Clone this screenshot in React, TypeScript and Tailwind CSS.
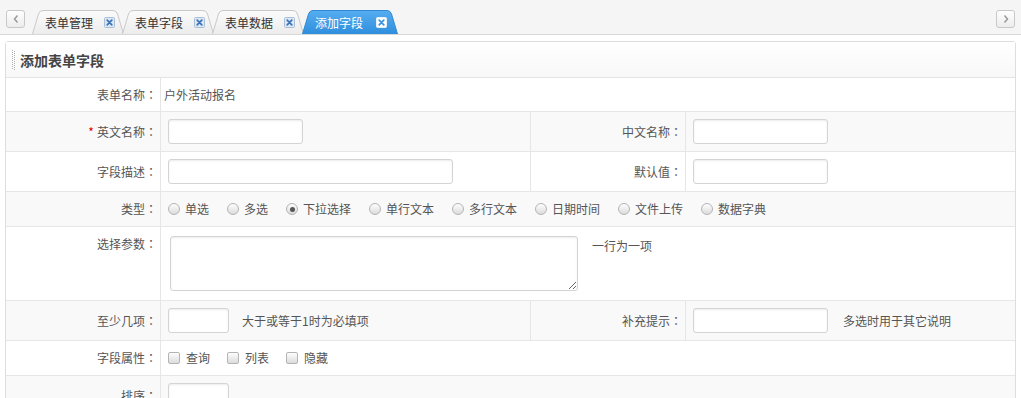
import React from "react";

const FONT = { fontFamily: '"Noto Sans CJK SC", "Liberation Sans", sans-serif' };

function CloseIcon({ active }: { active: boolean }) {
  return (
    <svg width="11" height="11" viewBox="0 0 11 11" className="shrink-0">
      <rect
        x="0.5"
        y="0.5"
        width="10"
        height="10"
        rx="1"
        fill={active ? "#ffffff" : "#dce7f3"}
        stroke={active ? "#e8f2fc" : "#a9bfd8"}
      />
      <path
        d="M3.2 3.2 L7.8 7.8 M7.8 3.2 L3.2 7.8"
        stroke={active ? "#3a93e0" : "#3a74b8"}
        strokeWidth="1.7"
        strokeLinecap="round"
      />
    </svg>
  );
}

function Tab({ label, active }: { label: string; active?: boolean }) {
  const w = active ? 96 : 92;
  const d = `M0.5,24 L6.5,4 Q7.6,0.5 11,0.5 L${w - 11},0.5 Q${w - 7.6},0.5 ${w - 6.5},4 L${w - 0.5},24`;
  return (
    <div
      className={
        active
          ? "relative -ml-[2px] flex h-[24px] w-[96px] shrink-0 items-center gap-[13px] pl-[13px] pt-[1px]"
          : "relative -ml-[2px] flex h-[24px] w-[92px] shrink-0 items-center gap-[11px] pl-[13px] pt-[1px]"
      }
    >
      <svg className="absolute inset-0" width={w} height="24" viewBox={`0 0 ${w} 24`}>
        <defs>
          <linearGradient id="tabInactive" x1="0" y1="0" x2="0" y2="1">
            <stop offset="0" stopColor="#fbfbfb" />
            <stop offset="1" stopColor="#ececec" />
          </linearGradient>
          <linearGradient id="tabActive" x1="0" y1="0" x2="0" y2="1">
            <stop offset="0" stopColor="#56aef0" />
            <stop offset="1" stopColor="#2f8edd" />
          </linearGradient>
        </defs>
        <path
          d={d + " Z"}
          fill={active ? "url(#tabActive)" : "url(#tabInactive)"}
          stroke="none"
        />
        <path d={d} fill="none" stroke={active ? "#2f89d4" : "#c9c9c9"} strokeWidth="1" />
      </svg>
      <span
        className={
          active
            ? "relative text-[12px] leading-[14px] text-white"
            : "relative text-[12px] leading-[14px] text-[#333]"
        }
      >
        {label}
      </span>
      <span className="relative flex">
        <CloseIcon active={!!active} />
      </span>
    </div>
  );
}

function ArrowButton({ dir }: { dir: "left" | "right" }) {
  return (
    <div className="mb-[6px] flex h-[18px] w-[19px] shrink-0 items-center justify-center rounded-[3px] border border-[#c8c8c8] bg-gradient-to-b from-white to-[#ececec]">
      <svg width="8" height="10" viewBox="0 0 8 10">
        <path
          d={dir === "left" ? "M5.5 1.5 L2.5 5 L5.5 8.5" : "M2.5 1.5 L5.5 5 L2.5 8.5"}
          fill="none"
          stroke="#9a9a9a"
          strokeWidth="1.5"
        />
      </svg>
    </div>
  );
}

function Input({ w }: { w: string }) {
  return (
    <div
      className={
        "h-[25px] rounded-[3px] border border-[#d4d4d4] bg-white shadow-[inset_0_1px_2px_rgba(0,0,0,0.08)] " + w
      }
    />
  );
}

function Radio({ label, checked }: { label: string; checked?: boolean }) {
  return (
    <div className="mr-[18px] flex items-center gap-[5px]">
      <span className="flex h-[12px] w-[12px] items-center justify-center rounded-full border border-[#b4b4b4] bg-gradient-to-b from-[#fdfdfd] to-[#dcdcdc]">
        {checked ? <span className="h-[5px] w-[5px] rounded-full bg-[#555]" /> : null}
      </span>
      <span>{label}</span>
    </div>
  );
}

function Checkbox({ label }: { label: string }) {
  return (
    <div className="mr-[17px] flex items-center gap-[6px]">
      <span className="h-[12px] w-[12px] rounded-[2px] border border-[#b4b4b4] bg-gradient-to-b from-[#fdfdfd] to-[#dcdcdc]" />
      <span>{label}</span>
    </div>
  );
}

function Colon() {
  return <span style={{ fontFamily: '"Noto Sans CJK TC", "Noto Sans CJK SC", sans-serif' }}>：</span>;
}

function Label({ children, top }: { children: React.ReactNode; top?: boolean }) {
  return (
    <div
      className={
        top
          ? "flex w-[155px] shrink-0 justify-end border-r border-[#e6e6e6] pr-[3px] pt-[10px] text-[#555]"
          : "flex w-[155px] shrink-0 items-center justify-end border-r border-[#e6e6e6] pr-[3px] text-[#555]"
      }
    >
      {children}
      <Colon />
    </div>
  );
}

export default function App() {
  return (
    <div
      className="h-[398px] w-[1021px] overflow-hidden bg-white text-[12px] leading-[14px] text-[#555]"
      style={FONT}
    >
      {/* Tab bar */}
      <div className="flex h-[35px] items-end justify-between border-b border-[#d8d8d8] bg-[#f5f5f5] pl-[6px] pr-[6px]">
        <div className="flex items-end">
          <ArrowButton dir="left" />
          <div className="ml-[9px] flex items-end">
            <Tab label="表单管理" />
            <Tab label="表单字段" />
            <Tab label="表单数据" />
            <Tab label="添加字段" active />
          </div>
        </div>
        <ArrowButton dir="right" />
      </div>

      {/* Panel */}
      <div className="mx-[5px] mt-[6px] rounded-t-[3px] border border-[#dedede]">
        <div className="flex h-[36px] items-center gap-[4px] border-b border-[#e3e3e3] bg-gradient-to-b from-white to-[#f8f8f8] pl-[6px]">
          <svg width="4" height="20" viewBox="0 0 4 20">
            {Array.from({ length: 10 }).map((_, i) => (
              <React.Fragment key={i}>
                <rect x="0" y={i * 2} width="1" height="1" fill="#b0b0b0" />
                <rect x="2" y={i * 2 + 1} width="1" height="1" fill="#b0b0b0" />
              </React.Fragment>
            ))}
          </svg>
          <span className="text-[14px] font-bold leading-[16px] text-[#444]">添加表单字段</span>
        </div>

        {/* Row 1 */}
        <div className="flex h-[34px] border-b border-[#e6e6e6] bg-white">
          <Label>表单名称</Label>
          <div className="flex items-center pl-[3px]">户外活动报名</div>
        </div>

        {/* Row 2 */}
        <div className="flex h-[40px] border-b border-[#e6e6e6] bg-[#f9f9f9]">
          <Label>
            <span className="mr-[3px] text-[#d00]">*</span>英文名称
          </Label>
          <div className="flex w-[370px] shrink-0 items-center border-r border-[#e6e6e6] pl-[7px]">
            <Input w="w-[135px]" />
          </div>
          <Label>中文名称</Label>
          <div className="flex items-center pl-[7px]">
            <Input w="w-[135px]" />
          </div>
        </div>

        {/* Row 3 */}
        <div className="flex h-[40px] border-b border-[#e6e6e6] bg-white">
          <Label>字段描述</Label>
          <div className="flex w-[370px] shrink-0 items-center border-r border-[#e6e6e6] pl-[7px]">
            <Input w="w-[285px]" />
          </div>
          <Label>默认值</Label>
          <div className="flex items-center pl-[7px]">
            <Input w="w-[135px]" />
          </div>
        </div>

        {/* Row 4 */}
        <div className="flex h-[35px] border-b border-[#e6e6e6] bg-[#f9f9f9]">
          <Label>类型</Label>
          <div className="flex items-center pl-[7px]">
            <Radio label="单选" />
            <Radio label="多选" />
            <Radio label="下拉选择" checked />
            <Radio label="单行文本" />
            <Radio label="多行文本" />
            <Radio label="日期时间" />
            <Radio label="文件上传" />
            <Radio label="数据字典" />
          </div>
        </div>

        {/* Row 5 */}
        <div className="flex h-[74px] border-b border-[#e6e6e6] bg-white">
          <Label top>选择参数</Label>
          <div className="flex items-start pl-[9px] pt-[9px]">
            <textarea className="h-[55px] w-[408px] resize rounded-[3px] border border-[#d4d4d4] bg-white shadow-[inset_0_1px_2px_rgba(0,0,0,0.08)] outline-none" />
            <span className="ml-[14px] pt-[3px]">一行为一项</span>
          </div>
        </div>

        {/* Row 6 */}
        <div className="flex h-[40px] border-b border-[#e6e6e6] bg-[#f9f9f9]">
          <Label>至少几项</Label>
          <div className="flex w-[370px] shrink-0 items-center border-r border-[#e6e6e6] pl-[7px]">
            <Input w="w-[61px]" />
            <span className="ml-[13px]">大于或等于1时为必填项</span>
          </div>
          <Label>补充提示</Label>
          <div className="flex items-center pl-[7px]">
            <Input w="w-[135px]" />
            <span className="ml-[15px]">多选时用于其它说明</span>
          </div>
        </div>

        {/* Row 7 */}
        <div className="flex h-[35px] border-b border-[#e6e6e6] bg-white">
          <Label>字段属性</Label>
          <div className="flex items-center pl-[7px]">
            <Checkbox label="查询" />
            <Checkbox label="列表" />
            <Checkbox label="隐藏" />
          </div>
        </div>

        {/* Row 8 */}
        <div className="flex h-[40px] border-b border-[#e6e6e6] bg-[#f9f9f9]">
          <Label>排序</Label>
          <div className="flex items-center pl-[7px]">
            <Input w="w-[61px]" />
          </div>
        </div>
      </div>
    </div>
  );
}
